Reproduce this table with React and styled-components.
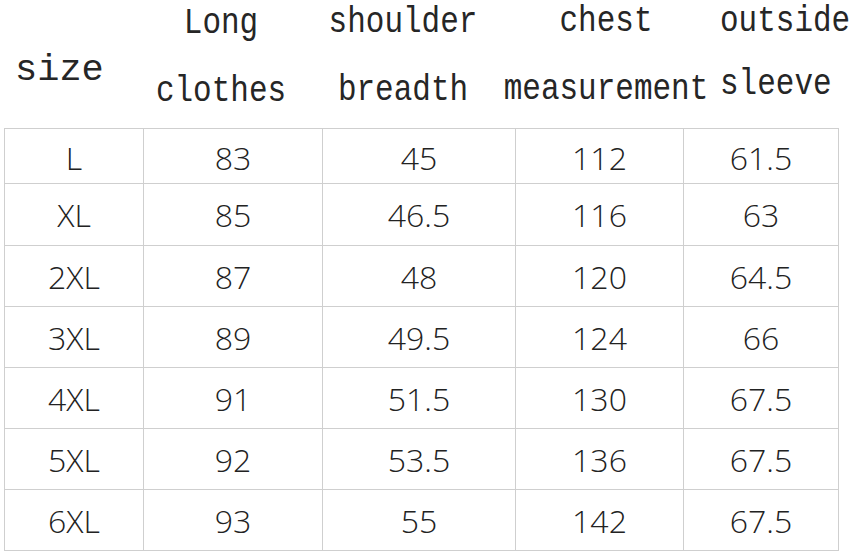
import React from "react";
import styled, { createGlobalStyle } from "styled-components";

const GlobalStyle = createGlobalStyle`
  html, body {
    margin: 0;
    padding: 0;
    background: #fff;
  }
`;

// ---- Styled Components ----
const Page = styled.div`
  width: 856px;
  height: 555px;
  background: #fff;
  color: #262626;
  overflow: hidden;
`;

const Header = styled.div`
  display: grid;
  grid-template-columns: 150px 142px 222px 184px 158px;
  height: 128px;
  font-family: "Liberation Mono", "DejaVu Sans Mono", monospace;
`;

const SizeLabel = styled.div`
  padding: 50px 0 0 15px;
  font-size: 37px;
  line-height: 40px;
  height: 40px;
`;

const HeadCell = styled.div`
  display: flex;
  flex-direction: column;
  align-items: ${({ left }) => (left ? "flex-start" : "center")};
  padding-top: ${({ shift }) => 7 + (shift || 0)}px;
  padding-left: ${({ left }) => (left ? "22px" : "0")};
  gap: ${({ gap }) => gap || 38}px;
`;

const HeadLine = styled.span`
  display: block;
  height: 30px;
  line-height: 30px;
  font-size: 31px;
  white-space: nowrap;
  transform: scaleY(1.2);
  transform-origin: center;
`;

const Grid = styled.div`
  display: grid;
  grid-template-columns: 139px 179px 193px 168px 155px;
  grid-template-rows: 55px 62px repeat(5, 61px);
  margin-left: 4px;
  width: max-content;
  border-left: 1px solid #cfcfcf;
  border-top: 1px solid #cfcfcf;
  font-family: "Open Sans", "Noto Sans", sans-serif;
  font-weight: 300;
`;

const Cell = styled.div`
  display: flex;
  align-items: center;
  justify-content: center;
  border-right: 1px solid #cfcfcf;
  border-bottom: 1px solid #cfcfcf;
  font-size: 32px;
  color: #222;
  padding-top: ${({ first }) => (first ? "3px" : "0")};
`;

const headings = [
  { lines: ["Long", "clothes"], shift: 1 },
  { lines: ["shoulder", "breadth"], shift: 0 },
  { lines: ["chest", "measurement"], shift: -1 },
  { lines: ["outside", "sleeve"], shift: -1, gap: 33, left: true },
];

const rows = [
  ["L", "83", "45", "112", "61.5"],
  ["XL", "85", "46.5", "116", "63"],
  ["2XL", "87", "48", "120", "64.5"],
  ["3XL", "89", "49.5", "124", "66"],
  ["4XL", "91", "51.5", "130", "67.5"],
  ["5XL", "92", "53.5", "136", "67.5"],
  ["6XL", "93", "55", "142", "67.5"],
];

export default function App() {
  return (
    <Page>
      <GlobalStyle />
      <Header>
        <SizeLabel>size</SizeLabel>
        {headings.map((h) => (
          <HeadCell key={h.lines[0]} shift={h.shift} gap={h.gap} left={h.left}>
            {h.lines.map((l) => (
              <HeadLine key={l}>{l}</HeadLine>
            ))}
          </HeadCell>
        ))}
      </Header>

      <Grid>
        {rows.map((row, r) =>
          row.map((val, c) => (
            <Cell key={`${r}-${c}`} first={r === 0}>
              {val}
            </Cell>
          ))
        )}
      </Grid>
    </Page>
  );
}
